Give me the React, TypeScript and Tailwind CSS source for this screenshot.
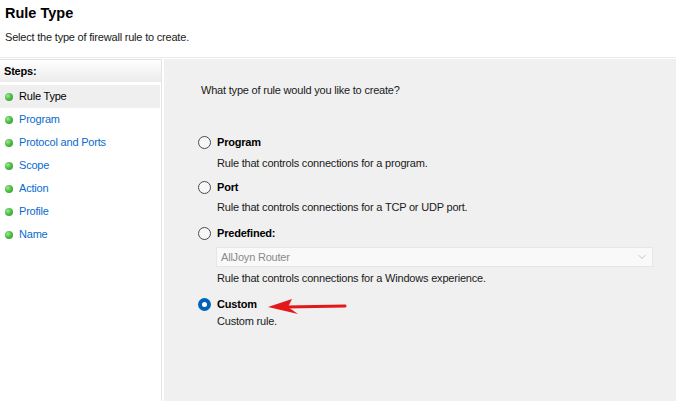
import { ChevronDown } from 'lucide-react'

const steps = ['Rule Type', 'Program', 'Protocol and Ports', 'Scope', 'Action', 'Profile', 'Name']

function Bullet() {
  return (
    <span className="inline-block w-[8px] h-[8px] rounded-full bg-[radial-gradient(circle_at_35%_35%,#a6e59a_0%,#4fbf45_45%,#2e8f2a_100%)]" />
  )
}

function Radio({ checked }: { checked?: boolean }) {
  if (checked) {
    return (
      <span className="w-[13px] h-[13px] rounded-full bg-[#0063b8] flex items-center justify-center shrink-0">
        <span className="w-[5px] h-[5px] rounded-full bg-white" />
      </span>
    )
  }
  return <span className="w-[13px] h-[13px] rounded-full border border-[#4a4a4a] bg-[#f7f7f7] shrink-0" />
}

function Option({ label, checked }: { label: string; checked?: boolean }) {
  return (
    <div className="flex items-center h-[16px] gap-[6px]">
      <Radio checked={checked} />
      <span className="font-bold text-black">{label}</span>
    </div>
  )
}

export default function App() {
  return (
    <div className="w-[676px] h-[401px] bg-white overflow-hidden flex flex-col font-['Liberation_Sans',Arial,sans-serif] text-[11px] tracking-[-0.2px] text-[#1a1a1a]">
      {/* Header */}
      <div className="h-[58px] border-b border-[#ebebeb] px-[5px] pt-[4px]">
        <h1 className="text-[14.5px] font-bold text-black leading-[18px] tracking-[0px]">Rule Type</h1>
        <p className="mt-[7px] leading-[16px]">Select the type of firewall rule to create.</p>
      </div>

      <div className="flex-1 flex pt-[1px]">
        {/* Steps */}
        <div className="w-[162px] border-t border-r border-[#e3e3e3] flex flex-col">
          <div className="h-[22px] flex items-center pl-[4px] font-bold text-black bg-[linear-gradient(#ffffff,#ececec)]">
            Steps:
          </div>
          <div className="mt-[3px]">
            {steps.map((s, i) => (
              <div
                key={s}
                className={`h-[23px] w-[160px] flex items-center pl-[5px] gap-[6px] ${i === 0 ? 'bg-[#efefef] text-black' : 'text-[#0a6ad0]'}`}
              >
                <Bullet />
                <span>{s}</span>
              </div>
            ))}
          </div>
        </div>

        {/* Content */}
        <div className="relative flex-1 ml-[2px] bg-[#f0f0f0] pl-[34px] pt-[23px]">
          <p className="leading-[16px] pl-[3px]">What type of rule would you like to create?</p>

          <div className="mt-[36px]">
            <Option label="Program" />
            <p className="mt-[5px] pl-[19px] leading-[16px]">Rule that controls connections for a program.</p>
          </div>

          <div className="mt-[8px]">
            <Option label="Port" />
            <p className="mt-[4px] pl-[19px] leading-[16px]">Rule that controls connections for a TCP or UDP port.</p>
          </div>

          <div className="mt-[10px]">
            <Option label="Predefined:" />
            <div className="mt-[6px] ml-[18px] w-[437px] h-[20px] bg-[#f9f9f9] border border-[#e6e6e6] flex items-center justify-between pl-[4px] pr-[4px] text-[#8a8a8a]">
              <span>AllJoyn Router</span>
              <ChevronDown className="w-[12px] h-[12px] text-[#9a9a9a]" strokeWidth={1.2} />
            </div>
            <p className="mt-[3px] pl-[19px] leading-[16px]">Rule that controls connections for a Windows experience.</p>
          </div>

          <div className="mt-[10px]">
            <Option label="Custom" checked />
            <p className="mt-[1px] pl-[19px] leading-[16px]">Custom rule.</p>
          </div>

          {/* red annotation arrow */}
          <svg className="absolute left-[100px] top-[236px]" width="90" height="24" viewBox="100 234 90 24">
            <line x1="122" y1="246" x2="181" y2="245" stroke="#e3181b" strokeWidth="3" strokeLinecap="round" />
            <polygon points="104,246 128,238 124,246 134,253" fill="#e3181b" />
          </svg>
        </div>
      </div>
    </div>
  )
}
